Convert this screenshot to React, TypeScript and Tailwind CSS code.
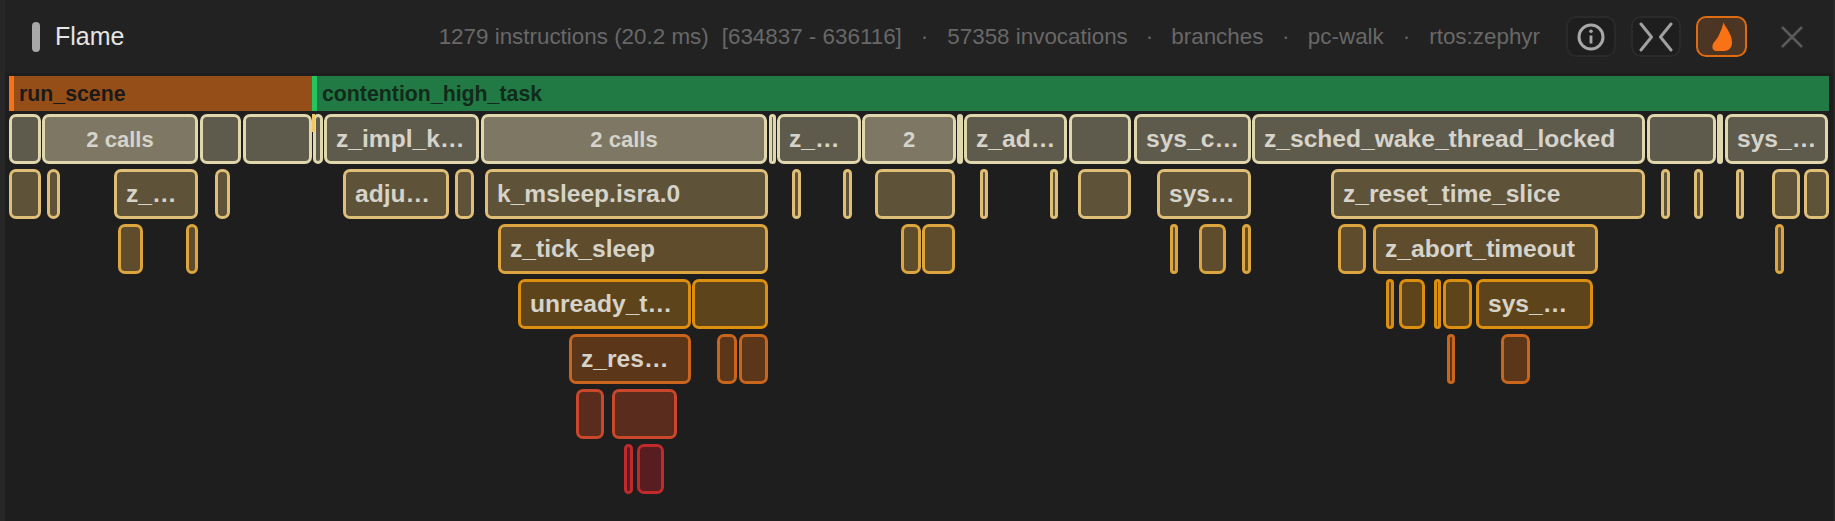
const ROWS: { color: string; nodes: [number, number, string?, boolean?][] }[] = [
  {
    color: "border-[#e0d7ac] bg-[#5f5b4c]",
    nodes: [
      [9, 41], [42, 198, "2 calls", true], [200, 241], [243, 312], [313, 323], [324, 479, "z_impl_k…"],
      [481, 767, "2 calls", true], [769, 776], [777, 861, "z_…"], [862, 956, "2", true], [957, 963],
      [964, 1067, "z_ad…"], [1069, 1131], [1134, 1251, "sys_c…"], [1252, 1645, "z_sched_wake_thread_locked"],
      [1647, 1716], [1717, 1723], [1725, 1828, "sys_…"],
    ],
  },
  {
    color: "border-[#dfbe78] bg-[#5e5238]",
    nodes: [
      [9, 41], [47, 60], [114, 198, "z_…"], [215, 230], [343, 449, "adju…"], [455, 474],
      [485, 768, "k_msleep.isra.0"], [792, 801], [843, 852], [875, 955], [980, 988], [1050, 1058],
      [1078, 1131], [1157, 1251, "sys…"], [1331, 1645, "z_reset_time_slice"], [1661, 1670], [1694, 1703],
      [1736, 1744], [1772, 1800], [1804, 1829],
    ],
  },
  {
    color: "border-[#dda53d] bg-[#5e4c2c]",
    nodes: [
      [118, 143], [186, 198], [498, 768, "z_tick_sleep"], [901, 921], [922, 955], [1170, 1178], [1199, 1226],
      [1242, 1251], [1338, 1366], [1373, 1598, "z_abort_timeout"], [1775, 1784],
    ],
  },
  {
    color: "border-[#dc8f0e] bg-[#5e441a]",
    nodes: [
      [518, 691, "unready_t…"], [692, 768], [1386, 1394], [1399, 1425], [1434, 1441], [1443, 1472],
      [1476, 1593, "sys_…"],
    ],
  },
  {
    color: "border-[#c9651c] bg-[#5c3619]",
    nodes: [[569, 691, "z_res…"], [717, 737], [739, 768], [1447, 1455], [1501, 1530]],
  },
  { color: "border-[#c9472a] bg-[#5a2c1e]", nodes: [[576, 604], [612, 677]] },
  { color: "border-[#c02a2a] bg-[#571d20]", nodes: [[624, 633], [637, 664]] },
];

function FlameIcon() {
  return (
    <svg width="20" height="30" viewBox="0 0 20 30" fill="#f97316">
      <path d="M11.500.5C13 5 20 11 20 20.500 20 26 16.500 29 12 29H5C2 29 0 27 .5 24 1 20 5 18 7 13 8.500 9.500 10.500 5 11.500.5z" />
    </svg>
  );
}

export default function App() {
  return (
    <div className="h-[521px] w-[1835px] overflow-hidden border-x-[5px] border-r-[2px] border-[#272727] bg-[#222222] font-['Liberation_Sans',sans-serif]">
      <header className="flex h-[73px] items-center pl-[27px] pr-[30px]">
        <div className="h-[30px] w-[8px] rounded-full bg-[#a8a8a8]" />
        <span className="ml-[15px] text-[25px] text-[#e4e4e4]">Flame</span>
        <div className="ml-auto flex items-center text-[22.400px] text-[#686868]">
          <span>1279 instructions (20.2 ms)</span>
          <span className="ml-[13px]">[634837 - 636116]</span>
          <span className="mx-[19px]">·</span>
          <span>57358 invocations</span>
          <span className="mx-[18px]">·</span>
          <span>branches</span>
          <span className="mx-[18.500px]">·</span>
          <span>pc-walk</span>
          <span className="mx-[19px]">·</span>
          <span>rtos:zephyr</span>
        </div>
        <div className="ml-[26px] flex items-center gap-[15px]">
          <button className="flex h-[41px] w-[50px] items-center justify-center rounded-[10px] border-2 border-[#2a2a2a] bg-[#1e1e1e]">
            <svg width="28" height="28" viewBox="0 0 28 28" fill="none" stroke="#a8a8a8" strokeWidth="3">
              <circle cx="14" cy="14" r="12" />
              <path d="M14 12.500v8" strokeWidth="2.800" />
              <circle cx="14" cy="8.300" r="1.800" fill="#a8a8a8" stroke="none" />
            </svg>
          </button>
          <button className="flex h-[41px] w-[50px] items-center justify-center rounded-[10px] border-2 border-[#2a2a2a] bg-[#1e1e1e]">
            <svg width="34" height="30" viewBox="0 0 34 30" fill="none" stroke="#a0a0a0" strokeWidth="3" strokeLinecap="round" strokeLinejoin="round">
              <path d="M2 2l10.500 13L2 28M32 2L21.500 15 32 28" />
            </svg>
          </button>
          <button className="flex h-[41px] w-[51px] items-center justify-center rounded-[10px] border-2 border-[#e06c12] bg-[#4d3524]">
            <FlameIcon />
          </button>
        </div>
        <svg className="ml-[34px]" width="22" height="22" viewBox="0 0 22 22" fill="none" stroke="#5a5a5a" strokeWidth="2.500">
          <path d="M1 1l20 20M21 1L1 21" />
        </svg>
      </header>
      <main className="h-[448px] bg-[#1e1e1e] pt-[3px]">
        <div className="relative h-[35px]">
          <div className="absolute left-[4px] top-0 flex h-full w-[303px] items-center border-l-[5px] border-[#f97316] bg-[#964e18] pl-[5px] pt-[2px]">
            <span className="text-[21.300px] font-bold text-[#1a1a1a]">run_scene</span>
          </div>
          <div className="absolute left-[307px] top-0 flex h-full w-[1517px] items-center border-l-[5px] border-[#22c55e] bg-[#217a43] pl-[5px] pt-[2px]">
            <span className="text-[21.300px] font-bold text-[#122a1b]">contention_high_task</span>
          </div>
        </div>
        <div className="mt-[3px] flex flex-col gap-[5.500px]">
          {ROWS.map((row, i) => (
            <div key={i} className="relative h-[49.500px]">
              {row.nodes.map(([left, right, label, group], j) => (
                <div
                  key={j}
                  className={`absolute top-0 flex h-full items-center overflow-hidden whitespace-nowrap rounded-[7px] border-[3px] font-bold text-[#d6d3ca] ${group ? "justify-center border-[#e0d7ac] bg-[#7d7763] pt-[1px] text-[22px]" : `${row.color} text-[24.600px]`} ${label && !group ? "pl-[9px] pt-[2px]" : ""}`}
                  style={{ left: left - 5, width: right - left }}
                >
                  {label}
                </div>
              ))}
              {i === 0 && <div className="absolute left-[307px] top-0 h-[18px] w-[3px] bg-[#f0c868]" />}
            </div>
          ))}
        </div>
      </main>
    </div>
  );
}
